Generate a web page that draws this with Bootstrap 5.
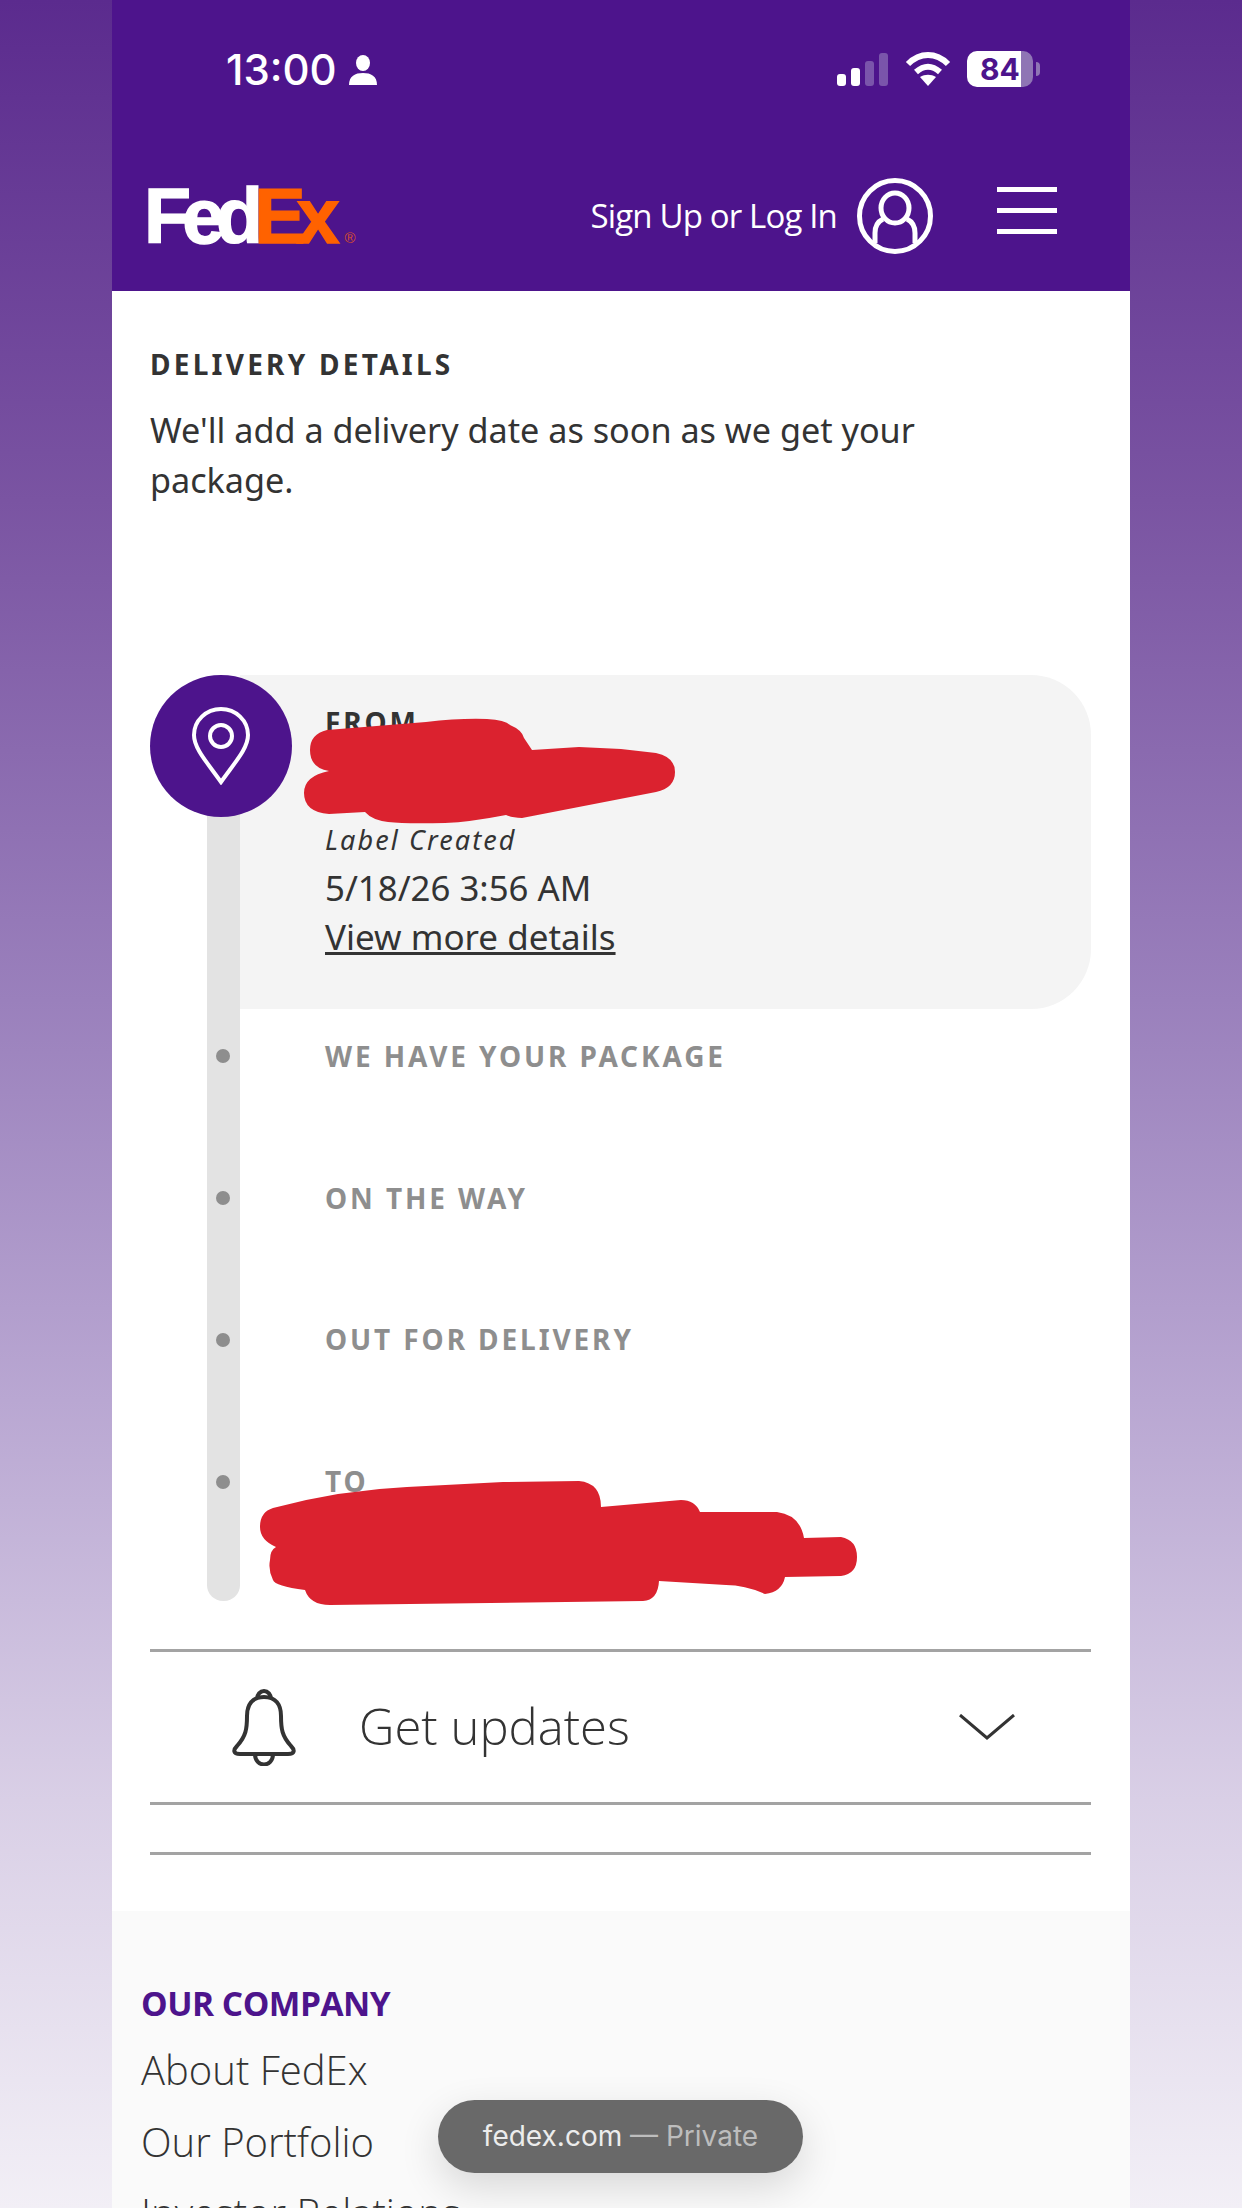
<!DOCTYPE html>
<html lang="en">
<head>
<meta charset="utf-8">
<title>FedEx Tracking</title>
<link rel="stylesheet" href="https://cdn.jsdelivr.net/npm/bootstrap@5.3.0/dist/css/bootstrap.min.css">
<style>
html,body{height:2208px;overflow:hidden}
body{font-family:"Noto Sans","Open Sans",sans-serif;color:#333;background:linear-gradient(180deg,#5b2b8e 0,#7a54a2 500px,#9a80bc 1000px,#b9a7d2 1400px,#d9cfe6 1800px,#f2eff6 2208px)}
.phone{width:1018px;height:2208px;margin:0 auto;background:#fff;overflow:hidden}
.topbar{background:#4d148c;height:291px;color:#fff}
.statusline{height:100px;padding:51px 90px 0 114px}
.clock{font-family:Inter,sans-serif;font-size:42px;font-weight:500;line-height:38px;margin-right:4px}
.bars{gap:5px;width:52px;height:34px}
.bars i{display:block;width:9px;background:#fff;border-radius:3px}
.bars i.dim{background:#7a55ab}
.battery{width:66px;height:36px;border-radius:10px;background:linear-gradient(90deg,#fff 0,#fff 82%,#8f75b5 82%);color:#4d148c;font:700 30px/36px Inter,sans-serif}
.nub{width:4px;height:14px;border-radius:0 4px 4px 0;background:#8f75b5;margin-left:3px}
.brandline{height:191px;padding:41px 73px 0 32px}
.wordmark{font:700 77px/78px "Liberation Sans",sans-serif;letter-spacing:-8.9px;color:#fff;text-decoration:none;-webkit-text-stroke:1.5px currentColor}
.wordmark b{color:#ff6200}
.wordmark sup{font-size:15px;letter-spacing:0;color:#d9502a;top:0;vertical-align:baseline;font-weight:400;margin-left:14px;-webkit-text-stroke:0}
.signin{font-family:"Open Sans",sans-serif;font-size:33px;letter-spacing:-.85px;color:#fff;text-decoration:none}
.avatar{margin:0 64px 0 20px}
.burger{width:60px;gap:16px;margin-bottom:12px}
.burger i{display:block;height:5px;background:#fff}
.body-wrap{padding:0 39px 0 38px}
.eyebrow{font-weight:700;font-size:28px;letter-spacing:2.9px;line-height:32px}
.dtitle{padding-top:57px;letter-spacing:3.25px}
.intro{font-size:34.2px;line-height:50px;margin:25px 0 0;max-width:820px}
.track{margin-top:170px;height:926px}
.pin{width:142px;height:142px;left:0;top:0;background:#4d148c}
.rail{width:33px;margin:71px 0 0 57px;height:855px;background:#e3e3e3;border-radius:0 0 16px 16px;padding-top:303px;gap:128px}
.rail i{display:block;width:14px;height:14px;border-radius:50%;background:#8e8e8e;margin-left:9px}
.fromcard{height:334px;background:#f4f4f4;border-radius:0 60px 60px 0;padding:32px 0 0 85px}
.eyebrow.fromtxt{line-height:30px}
.gap-block{height:85px}
.lblcreated{font-style:italic;font-size:27px;letter-spacing:2.1px;line-height:36px}
.stamp{font-size:34.8px;line-height:48px;margin-top:6px}
.morelink{font-size:35px;line-height:50px;color:#333}
.stop{height:141.7px;padding:31px 0 0 85px;color:#8e8e8e}
.scribble{left:112px;top:0;width:1018px;height:2208px;pointer-events:none}
.updates{height:156px;border-top:3px solid #a3a3a3;border-bottom:3px solid #a3a3a3;margin-top:48px;padding:0 76px 0 80px;font-family:"Open Sans",sans-serif;font-weight:300;font-size:49px}
.updates span{margin-left:61px}
.thinline{height:50px;border-bottom:3px solid #a3a3a3}
.sitefoot{margin-top:56px;background:#fafafa;padding:72px 29px 0;height:400px}
.foothead{font-size:33.5px;font-weight:700;color:#4d148c;line-height:40px;letter-spacing:-.5px;font-family:"Open Sans",sans-serif}
.footlinks a{display:block;font-family:"Open Sans",sans-serif;font-weight:300;font-size:40px;line-height:71.5px;color:#333;text-decoration:none}
.footlinks{margin-top:11px}
.urlpill{left:438px;top:2100px;width:365px;height:73px;background:#696969;color:#ececec;font:400 28px/73px Inter,sans-serif;box-shadow:0 14px 40px rgba(0,0,0,.14)}
.urlpill em{font-style:normal;color:#bdbdbd}
</style>
</head>
<body>
<div class="phone">
  <header class="topbar">
    <div class="statusline d-flex justify-content-between align-items-start">
      <div class="d-flex align-items-center gap-2">
        <span class="clock">13:00</span>
        <svg width="28" height="30" viewBox="0 0 28 30"><ellipse cx="14" cy="8" rx="7" ry="8" fill="#fff"/><path d="M0 30c0-9 6-12 14-12s14 3 14 12z" fill="#fff"/></svg>
      </div>
      <div class="d-flex align-items-center">
        <div class="bars d-flex align-items-end">
          <i style="height:12px"></i><i style="height:18px"></i><i class="dim" style="height:25px"></i><i class="dim" style="height:33px"></i>
        </div>
        <svg class="ms-3" width="46" height="34" viewBox="0 0 46 34"><path d="M3 12C15 0 31 0 43 12" fill="none" stroke="#fff" stroke-width="6"/><path d="M11 20c8-7 16-7 24 0" fill="none" stroke="#fff" stroke-width="6"/><path d="M23 34l-8-9c5-3 11-3 16 0z" fill="#fff"/></svg>
        <div class="battery text-center ms-3">84</div>
        <div class="nub"></div>
      </div>
    </div>
    <div class="brandline d-flex justify-content-between align-items-center">
      <a class="wordmark" href="#">Fed<b>Ex</b><sup>®</sup></a>
      <div class="d-flex align-items-center">
        <a class="signin" href="#">Sign Up or Log In</a>
        <svg class="avatar" width="76" height="76" viewBox="0 0 76 76" fill="none" stroke="#fff" stroke-width="5"><circle cx="38" cy="38" r="35.5"/><ellipse cx="38" cy="30" rx="14" ry="15"/><path d="M26 41c-6 3-8 7-8 14v10M50 41c6 3 8 7 8 14v10"/></svg>
        <div class="burger d-flex flex-column"><i></i><i></i><i></i></div>
      </div>
    </div>
  </header>
  <main class="body-wrap">
    <div class="eyebrow dtitle">DELIVERY DETAILS</div>
    <p class="intro">We'll add a delivery date as soon as we get your package.</p>
    <section class="track position-relative d-flex">
      <div class="rail d-flex flex-column flex-shrink-0"><i></i><i></i><i></i><i></i></div>
      <div class="flex-grow-1">
        <div class="fromcard">
          <div class="eyebrow fromtxt">FROM</div>
          <div class="gap-block"></div>
          <div class="lblcreated">Label Created</div>
          <div class="stamp">5/18/26 3:56 AM</div>
          <a class="morelink" href="#">View more details</a>
        </div>
        <div class="stop eyebrow">WE HAVE YOUR PACKAGE</div>
        <div class="stop eyebrow">ON THE WAY</div>
        <div class="stop eyebrow">OUT FOR DELIVERY</div>
        <div class="stop eyebrow">TO</div>
      </div>
      <div class="pin position-absolute rounded-circle d-flex align-items-center justify-content-center">
        <svg width="58" height="78" viewBox="0 0 58 78" fill="none" stroke="#fff" stroke-width="4"><path d="M29 75C14 54 2 41 2 28a27 26 0 0 1 54 0c0 13-12 26-27 47z"/><circle cx="29" cy="29" r="11"/></svg>
      </div>
    </section>
    <div class="updates d-flex align-items-center">
      <svg width="68" height="78" viewBox="0 0 68 78" fill="none" stroke="#333" stroke-width="4"><path d="M27 11a7 8 0 1 1 14 0"/><path d="M34 9c-12 0-17 8-17 19 0 13-1 20-10 30-4 4-4 8 3 8h48c7 0 7-4 3-8-9-10-10-17-10-30 0-11-5-19-17-19z"/><path d="M25 66c0 14 18 14 18 0"/></svg>
      <span>Get updates</span>
      <svg class="ms-auto" width="56" height="26" viewBox="0 0 56 26" fill="none" stroke="#333" stroke-width="3"><path d="M1 1l27 23L55 1"/></svg>
    </div>
    <div class="thinline"></div>
  </main>
  <footer class="sitefoot">
    <div class="foothead">OUR COMPANY</div>
    <div class="footlinks">
      <a href="#">About FedEx</a>
      <a href="#">Our Portfolio</a>
      <a href="#">Investor Relations</a>
    </div>
  </footer>
</div>
<svg class="scribble position-absolute" viewBox="112 0 1018 2208" fill="#db222f">
  <path d="M327 730L426 722Q460 718 487 719Q505 720 510 725Q522 730 524 738L532 750L579 747L621 749L656 753Q675 757 675 772Q675 788 656 792L522 818Q512 818 506 815Q470 822 445 823Q405 824 388 822Q372 820 365 812L329 814Q304 812 304 793Q304 776 329 771Q310 768 310 750Q310 734 327 730Z"/>
  <path d="M273 1508Q340 1490 407 1487L503 1482L579 1481Q601 1483 601 1507L681 1500Q695 1500 700 1512L777 1512Q800 1515 804 1538L841 1537Q857 1540 857 1557Q857 1574 841 1576L785 1577Q782 1592 765 1594Q745 1585 726 1585L659 1581Q658 1600 643 1601L330 1605Q310 1605 305 1590Q275 1586 273 1580Q268 1570 270 1560Q270 1550 276 1547Q260 1540 260 1527Q260 1512 273 1508Z"/>
</svg>
<div class="urlpill position-absolute rounded-pill text-center">fedex.com <em>— Private</em></div>
<script src="https://cdn.jsdelivr.net/npm/bootstrap@5.3.0/dist/js/bootstrap.bundle.min.js"></script>
</body>
</html>
